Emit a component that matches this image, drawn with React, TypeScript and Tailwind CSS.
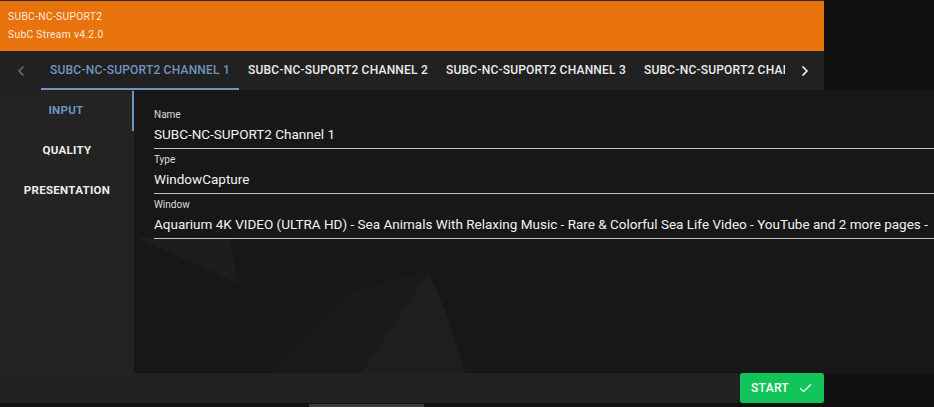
import { Check, ChevronLeft, ChevronRight } from 'lucide-react';

const tabs = [
  'SUBC-NC-SUPORT2 CHANNEL 1',
  'SUBC-NC-SUPORT2 CHANNEL 2',
  'SUBC-NC-SUPORT2 CHANNEL 3',
  'SUBC-NC-SUPORT2 CHANNEL 4',
];

const fields = [
  { label: 'Name', value: 'SUBC-NC-SUPORT2 Channel 1' },
  { label: 'Type', value: 'WindowCapture' },
  {
    label: 'Window',
    value:
      'Aquarium 4K VIDEO (ULTRA HD) - Sea Animals With Relaxing Music - Rare & Colorful Sea Life Video - YouTube and 2 more pages -',
  },
];

export default function App() {
  return (
    <div
      className="relative w-[934px] h-[407px] overflow-hidden bg-[#111111] text-white"
      style={{ fontFamily: 'Roboto, "Liberation Sans", sans-serif' }}
    >
      <div className="flex flex-col w-[824px] h-[403px]">
        {/* ── Header ─────────────────────────────── */}
        <div className="h-[51px] shrink-0 border-t border-[#2a2a2a] bg-[#e8720c] pl-2 pb-[2px] flex flex-col justify-center gap-[7px] text-[10.3px] leading-[11px] tracking-[0.3px] text-[#fbe9d9]">
          <span>SUBC-NC-SUPORT2</span>
          <span>SubC Stream v4.2.0</span>
        </div>

        {/* ── Channel tabs ───────────────────────── */}
        <div className="h-[39px] shrink-0 bg-[#212121] flex items-stretch">
          <div className="w-[41px] shrink-0 flex items-center justify-center text-[#6a6a6a]">
            <ChevronLeft size={16} strokeWidth={2.5} />
          </div>
          <div className="flex-1 flex overflow-hidden">
            {tabs.map((t, i) => (
              <div
                key={t}
                className={
                  'shrink-0 w-[198px] flex items-center justify-center text-[12px] font-medium tracking-[0.2px] whitespace-nowrap border-b-2 ' +
                  (i === 0 ? 'text-[#6f95bf] border-[#6f95bf]' : 'text-[#ececec] border-transparent')
                }
              >
                {t}
              </div>
            ))}
          </div>
          <div className="w-[39px] shrink-0 flex items-center justify-center text-white">
            <ChevronRight size={16} strokeWidth={2.5} />
          </div>
        </div>

        {/* ── Body ───────────────────────────────── */}
        <div className="flex-1 flex min-h-0">
          <div className="w-[134px] shrink-0 bg-[#232323] flex flex-col pt-[1px] text-[11.5px] font-bold tracking-[0.3px]">
            <div className="h-[40px] flex items-center justify-center text-[#6f95bf] border-r-2 border-[#6f95bf]">
              INPUT
            </div>
            <div className="h-[40px] flex items-center justify-center text-[#eeeeee]">QUALITY</div>
            <div className="h-[40px] flex items-center justify-center text-[#eeeeee]">PRESENTATION</div>
          </div>

          <div className="relative flex-1 bg-[#171717]">
            <svg className="absolute inset-0 w-full h-full" viewBox="0 0 690 283" preserveAspectRatio="none">
              <polygon points="1,147 83,147 89,193" fill="#1d1d1e" />
              <polygon points="100,40 140,0 190,0 150,283 118,283" fill="#181818" />
              <polygon points="120,283 190,200 254,182 250,283" fill="#1a1a1a" />
              <polygon points="254,182 196,283 286,283 270,225" fill="#1e1e1f" />
            </svg>
            <div className="relative w-[780px] ml-[20px] pt-[14px] flex flex-col">
              {fields.map((f) => (
                <div key={f.label} className="flex flex-col border-b border-[#bdbdbd] h-[45px] pt-[5px]">
                  <span className="text-[10px] leading-[12px] text-[#dddddd]">{f.label}</span>
                  <span className="mt-[5px] text-[13.5px] leading-[16px] text-[#f2f2f2] whitespace-nowrap overflow-hidden">
                    {f.value}
                  </span>
                </div>
              ))}
            </div>
          </div>
        </div>

        {/* ── Footer ─────────────────────────────── */}
        <div className="h-[30px] shrink-0 bg-[#222222] flex justify-end">
          <button className="w-[84px] h-full rounded-[3px] bg-[#12c55a] flex items-center justify-center gap-[9px] text-[12px] font-medium tracking-[0.3px] text-white">
            START
            <Check size={15} strokeWidth={2} />
          </button>
        </div>
      </div>

      {/* horizontal scrollbar thumb */}
      <div className="absolute left-[309px] top-[404px] w-[115px] h-[3px] bg-[#3a3a3a]" />
    </div>
  );
}
